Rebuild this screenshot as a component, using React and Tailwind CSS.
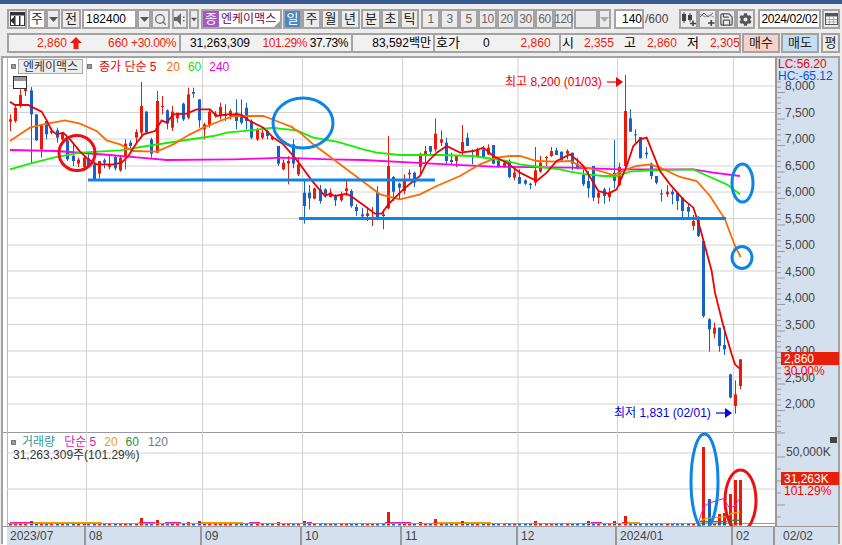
import React from 'react';
import { Search, Save } from 'lucide-react';
import { FaCog } from 'react-icons/fa';

// candle data read off the chart: [x, high, low, top, bottom, colour]
const sec3 = [
  [31,100,150,115,122,'r'],[46,70,125,80,120,'r'],[61,25,80,42,70,'r'],[76,-8,45,0,30,'r'],[94,18,248,28,100,'b'],
  [109,100,180,100,178,'b'],[124,130,230,130,205,'r'],[139,115,175,120,160,'b'],[154,140,160,150,155,'r'],[172,140,185,148,170,'b'],
  [187,155,185,155,175,'r'],[202,175,240,178,235,'b'],[220,185,255,225,240,'b'],[235,230,258,236,248,'r'],[252,225,262,230,258,'r'],
  [265,220,258,232,255,'b'],[283,248,300,250,296,'b'],[298,240,292,240,278,'r'],[313,232,262,238,245,'b'],[328,225,265,250,258,'r'],
  [346,225,268,228,262,'b'],[361,225,272,230,268,'r'],[376,175,265,188,225,'r'],[391,178,205,185,195,'b'],[409,145,190,153,170,'r'],
  [424,3,165,75,155,'r'],[439,90,155,92,155,'b'],[454,170,230,175,218,'b'],[472,30,215,60,215,'r'],[487,45,100,75,77,'r'],
  [502,85,145,88,128,'b'],[517,75,150,92,140,'r'],[532,98,125,95,112,'r'],[550,65,120,68,115,'b'],[565,20,115,40,110,'r'],
  [580,20,50,33,38,'b'],[598,55,140,55,118,'b'],[613,125,175,130,145,'r'],[628,85,140,92,135,'r'],[646,90,110,98,105,'r'],
  [661,65,115,78,105,'r'],[676,70,120,100,105,'r'],[691,85,115,90,105,'r'],[709,55,145,95,120,'b'],[724,55,130,100,125,'b'],
  [739,65,145,80,120,'b'],[754,115,175,120,170,'b'],[772,140,180,145,175,'r'],[787,145,175,155,170,'r'],[802,145,175,150,165,'b'],
  [817,165,178,168,175,'r'],[835,195,255,195,248,'b'],[850,235,268,245,265,'r'],[865,225,310,240,248,'r'],[880,175,262,190,248,'b'],
  [895,230,285,250,280,'r'],
];
const sec4 = [
  [73,300,428,335,375,'b'],[88,312,385,335,352,'b'],[103,320,355,322,353,'r'],[121,312,368,325,360,'b'],[136,322,350,325,340,'b'],
  [151,322,350,335,348,'r'],[166,340,375,342,358,'b'],[184,332,362,342,358,'r'],[199,300,345,322,330,'r'],[214,325,380,330,375,'b'],
  [229,370,405,378,390,'b'],[247,380,408,400,406,'b'],[262,378,420,397,405,'r'],[277,378,435,408,412,'r'],[292,315,418,335,412,'b'],
  [310,385,445,400,405,'b'],[325,165,385,255,382,'r'],[340,285,360,288,332,'b'],[358,305,355,308,320,'b'],[373,280,340,295,330,'r'],
  [388,265,300,275,280,'r'],[403,272,318,275,305,'b'],[421,215,285,218,258,'r'],[436,195,250,210,225,'r'],[451,195,225,195,212,'b'],
  [466,112,212,158,205,'r'],[484,148,195,175,185,'r'],[499,170,250,185,240,'b'],[514,215,250,237,243,'b'],[529,222,258,225,240,'r'],
  [547,132,222,183,210,'r'],[562,155,195,170,195,'b'],[577,205,250,210,212,'b'],[592,200,230,205,228,'r'],[610,195,232,205,230,'b'],
  [625,190,222,200,220,'r'],[640,192,250,192,248,'b'],[655,235,260,238,255,'b'],[673,240,260,245,258,'r'],[688,235,292,240,288,'b'],
  [703,258,298,275,290,'r'],[718,265,308,288,308,'b'],[736,295,312,298,308,'b'],[751,305,325,308,312,'b'],[766,198,315,268,305,'r'],
  [781,225,275,245,272,'r'],[799,225,255,228,232,'r'],[814,198,228,210,225,'r'],[829,200,222,208,222,'b'],[844,212,240,212,238,'b'],
  [862,205,235,210,218,'r'],[877,215,268,215,248,'b'],[892,230,265,248,262,'b'],
];
const sec5 = [
  [40,295,345,312,340,'b'],[55,300,380,330,352,'b'],[70,285,390,285,380,'b'],[85,360,398,365,380,'r'],[103,350,398,355,375,'b'],
  [118,350,392,365,378,'r'],[133,207,352,305,330,'b'],[148,275,345,288,342,'r'],[166,12,295,120,285,'r'],[181,115,182,142,182,'b'],
  [196,175,215,190,192,'b'],[211,198,262,198,262,'b'],[229,228,262,245,250,'b'],[244,275,325,278,315,'b'],[259,315,340,315,335,'b'],
  [274,355,392,367,369,'b'],[292,342,378,362,370,'r'],[307,355,400,362,370,'b'],[322,365,417,365,390,'b'],[337,378,442,380,420,'b'],
  [355,398,438,408,422,'b'],[370,432,478,450,465,'r'],[385,435,498,448,495,'b'],
];
const sec6 = [
  [310,-66,170,-60,165,'b'],[328,172,272,175,205,'b'],[343,185,232,200,218,'r'],[358,200,272,200,255,'b'],[373,195,282,252,265,'b'],
  [391,338,412,340,410,'b'],[406,358,458,400,435,'r'],[421,295,385,295,375,'r'],
];

const toPage = (list, ox, oy) =>
  list.map(([x, hi, lo, top, bot, c]) => ({
    x: Math.round(ox + x / 3),
    hi: oy + hi / 3,
    lo: oy + lo / 3,
    top: oy + top / 3,
    bot: oy + bot / 3,
    c,
  }));

const candles = [
  ...toPage(sec3, 0, 80),
  ...toPage(sec4, 280, 80),
  ...toPage(sec5, 570, 70),
  ...toPage(sec6, 600, 260),
];

const pts = (list, ox, oy) => list.map(([x, y]) => `${ox + x / 3},${oy + y / 3}`).join(' ');

const ma5 = [
  pts([[30,62],[45,72],[85,72],[100,80],[125,92],[140,118],[155,148],[170,160],[190,155],[210,175],[240,212],[265,235],[290,250],[340,250],[365,245],[385,225],[410,185],[430,160],[465,150],[485,118],[500,125],[520,100],[560,98],[590,85],[630,85],[650,105],[680,100],[720,100],[750,120],[790,140],[820,170],[850,190],[880,225]], 0, 80),
  pts([[40,225],[60,250],[95,298],[135,345],[150,338],[165,345],[200,338],[220,350],[250,372],[285,398],[305,398],[325,370],[345,350],[370,325],[400,300],[420,285],[440,245],[470,215],[500,195],[540,215],[580,210],[610,200],[640,225],[680,245],[720,275],[770,300],[800,275],[830,240],[870,220],[900,245]], 280, 80),
  pts([[40,285],[60,318],[85,360],[115,368],[140,355],[170,285],[190,225],[210,205],[230,200],[250,250],[270,300],[300,340],[340,385],[370,410],[390,470],[425,600]], 570, 70),
  pts([[345,95],[370,195],[395,280],[405,310],[418,322]], 600, 260),
].join(' ');

const ma20 = [
  pts([[30,180],[60,160],[90,140],[130,130],[195,118],[240,128],[290,150],[320,178],[360,190],[400,210],[470,212],[520,190],[570,160],[610,140],[660,120],[700,105],[790,105],[830,120],[880,140]], 0, 80),
  pts([[30,135],[60,155],[100,190],[160,235],[240,295],[300,340],[360,355],[420,340],[470,315],[540,285],[600,250],[650,230],[690,225],[720,225],[770,240],[830,242]], 280, 80),
  pts([[0,270],[30,285],[90,300],[130,312],[170,295],[200,285],[240,280],[270,290],[330,318],[380,330],[420,375],[465,445],[495,525],[512,558]], 570, 70),
].join(' ');

const ma60 = [
  pts([[30,265],[90,248],[160,230],[240,215],[360,208],[440,195],[540,180],[640,165],[680,155],[750,148],[820,140]], 0, 80),
  pts([[0,143],[50,148],[100,170],[170,182],[250,205],[290,215],[360,222],[480,222],[580,225],[680,240],[720,250],[780,258],[840,265]], 280, 80),
  pts([[0,302],[50,310],[100,315],[140,315],[180,302],[240,298],[370,295],[420,318],[470,340],[510,370]], 570, 70),
].join(' ');

const ma240 = [
  pts([[30,207],[170,210],[330,222],[420,230],[500,237],[700,235],[800,232]], 0, 80),
  pts([[0,230],[150,235],[250,237],[400,245],[500,250],[640,257]], 280, 80),
  pts([[0,290],[150,295],[370,295],[430,305],[510,315]], 570, 70),
].join(' ');

const RED = '#e9190b';
const BLUE = '#1560c9';
const MARK = '#0d84e8';
const gridX = [86.5, 202.5, 302.5, 402.5, 518, 617.5, 733.5];
const gridY = [85, 111.5, 138, 165, 191, 217.5, 244, 270, 297, 323.5, 350, 376, 403];
const prices = ['8,000', '7,500', '7,000', '6,500', '6,000', '5,500', '5,000', '4,500', '4,000', '3,500', '3,000', '2,500', '2,000'];

// [x, y top] small volume bars
const lowVol = [[30,520],[140,517],[156,519],[187,521],[198,520],[277,521],[303,520],[387,511],[419,521],[434,518],[461,520],[534,520],[587,520],[613,520],[624,515]];
const bigVol = [[702,446,RED],[708,498,BLUE],[718,513,RED],[723,512,RED],[729,493,RED],[734,479,RED],[739,479,RED]];
const volSegs = [
  [10,33,'#e020b0'],[33,102,'#eba000'],[139,155,'#e020b0'],[165,181,'#e020b0'],[198,243,'#eba000'],[249,260,'#e020b0'],[307,312,'#e020b0'],
  [385,411,'#e020b0'],[433,491,'#eba000'],[591,602,'#e020b0'],[622,638,'#e020b0'],[628,640,'#eba000'],
];

const Btn = ({ className = 'bg-[#ececec]', children }) => (
  <div className={`h-full shrink-0 flex items-center justify-center border-2 border-[#a3a3a3] text-[13px] text-[#222] ${className}`}>
    {children}
  </div>
);

const Caret = ({ color = '#555' }) => (
  <svg width="9" height="5" viewBox="0 0 9 5"><polygon points="0,0 9,0 4.5,5" fill={color} /></svg>
);

const Arrow = ({ color, w = 16 }) => (
  <svg width={w} height="10" viewBox={`0 0 ${w} 10`}>
    <line x1="0" y1="5" x2={w - 6} y2="5" stroke={color} strokeWidth="1.2" />
    <polygon points={`${w - 7},0 ${w},5 ${w - 7},10`} fill={color} />
  </svg>
);

const Toolbar = () => (
  <div className="flex h-[20px] mt-[5px] ml-[7px]">
    <Btn className="w-[20px] bg-[#ececec]">
      <svg width="15" height="14" viewBox="0 0 15 14">
        <rect x="0.5" y="0.5" width="14" height="13" fill="#fff" stroke="#333" />
        <rect x="1" y="1" width="13" height="2.5" fill="#333" />
        <rect x="4" y="4" width="1.5" height="9" fill="#333" />
        <rect x="9" y="4" width="1.5" height="9" fill="#333" />
        <polygon points="0,8.5 4,5 4,12" fill="#333" />
      </svg>
    </Btn>
    <Btn className="w-[18px] ml-[1px] bg-white">주</Btn>
    <Btn className="w-[14px] bg-[#ececec]"><Caret /></Btn>
    <Btn className="w-[20px] ml-[1px] bg-[#ececec]">전</Btn>
    <div className="w-[55px] ml-[1px] h-full bg-white border-2 border-[#a3a3a3] flex items-center pl-[2px] text-[12px] text-black">182400</div>
    <Btn className="w-[14px] bg-[#ececec]"><Caret /></Btn>
    <Btn className="w-[19px] bg-[#ececec]"><Search size={13} color="#666" strokeWidth={2.2} /></Btn>
    <Btn className="w-[16px] ml-[2px] bg-[#ececec]">
      <svg width="12" height="12" viewBox="0 0 12 12">
        <polygon points="0,4 3,4 7,0 7,12 3,8 0,8" fill="#666" />
        <rect x="9" y="3.5" width="1.5" height="1.5" fill="#666" />
        <rect x="9" y="7" width="1.5" height="1.5" fill="#666" />
      </svg>
    </Btn>
    <Btn className="w-[10px] ml-[1px] bg-[#ececec]"><Caret /></Btn>
    <div className="relative w-[81px] ml-[2px] h-full bg-white border-2 border-[#a3a3a3] flex items-center text-[12px] text-[#6b0a52] whitespace-nowrap">
      <span className="w-[16px] h-full shrink-0 bg-[#a956c9] text-white text-[13px] flex items-center justify-center">종</span>
      <span className="ml-[2px]">엔케이맥스</span>
      <span className="absolute right-0 bottom-0 w-0 h-0 border-l-[6px] border-l-transparent border-b-[6px] border-b-[#999]" />
    </div>
    <Btn className="w-[19px] ml-[1px] !text-white bg-[#4d86c6]">일</Btn>
    <Btn className="w-[19px] bg-[#ececec]">주</Btn>
    <Btn className="w-[19px] bg-[#ececec]">월</Btn>
    <Btn className="w-[20px] bg-[#ececec]">년</Btn>
    <Btn className="w-[20px] ml-[1px] bg-[#ececec]">분</Btn>
    <Btn className="w-[19px] bg-[#ececec]">초</Btn>
    <Btn className="w-[19px] bg-[#ececec]">틱</Btn>
    {['1', '3', '5', '10', '20', '30', '60', '120'].map((n, i) => (
      <Btn key={n} className={`w-[19px] bg-[#ececec] !text-[#666] tracking-[-0.5px] !text-[12px] ${i === 0 ? 'ml-[2px]' : ''}`}>{n}</Btn>
    ))}
    <Btn className="w-[24px] ml-[1px] bg-[#ececec]" />
    <Btn className="w-[13px] bg-[#ececec]"><Caret color="#aaa" /></Btn>
    <div className="w-[30px] ml-[3px] h-full bg-white border-2 border-[#a3a3a3] flex items-center justify-end text-[12px] text-black">140</div>
    <div className="w-[24px] ml-[1px] h-full flex items-center text-[12px] text-[#444]">/600</div>
    <Btn className="w-[19px] ml-[10px] bg-[#ececec]">
      <svg width="15" height="14" viewBox="0 0 15 14">
        <rect x="1" y="2" width="4" height="7" fill="#444" /><line x1="3" y1="0" x2="3" y2="11" stroke="#444" />
        <rect x="7" y="3" width="4" height="5" fill="#444" /><line x1="9" y1="1" x2="9" y2="10" stroke="#444" />
        <path d="M9 11.5h6M12 8.5v6" stroke="#444" strokeWidth="1.6" />
      </svg>
    </Btn>
    <Btn className="w-[19px] bg-[#ececec]">
      <svg width="15" height="14" viewBox="0 0 15 14" fill="none">
        <path d="M0 5L4 1L8 5L13 1" stroke="#666" />
        <path d="M0 2L5 5L9 3L14 5" stroke="#999" />
        <path d="M8 11h6.500M11.300 8v6" stroke="#444" strokeWidth="1.600" />
      </svg>
    </Btn>
    <Btn className="w-[19px] bg-[#ececec]"><Save size={15} color="#555" strokeWidth={2} /></Btn>
    <Btn className="w-[19px] bg-[#ececec]"><FaCog size={13} color="#555" /></Btn>
    <div className="w-[63px] ml-[3px] h-full bg-white border-2 border-[#a3a3a3] flex items-center justify-center text-[12px] tracking-[-0.4px] text-black">2024/02/02</div>
    <Btn className="w-[18px] ml-[1px] bg-[#ececec]">
      <svg width="13" height="12" viewBox="0 0 13 12" fill="none">
        <rect x="0.500" y="0.500" width="12" height="11" stroke="#555" fill="#fff" />
        <rect x="1" y="1" width="11" height="2.500" fill="#555" />
        <path d="M1 6.500h11M1 9h11M4.500 3v8M8.500 3v8" stroke="#aaa" />
      </svg>
    </Btn>
  </div>
);

const Cell = ({ w, className = '', children }) => (
  <span className={`shrink-0 text-right ${w} ${className}`}>{children}</span>
);

const QuoteRow = () => (
  <div className="flex h-[20px] mt-[4px] ml-[7px] text-[12px]">
    <div className="flex items-center w-[172px] h-full bg-[#f1f1f1] border-2 border-r-0 border-[#a3a3a3] text-[#ee1c0c] whitespace-nowrap">
      <Cell w="w-[58px]">2,860</Cell>
      <svg className="ml-[3px]" width="12" height="12" viewBox="0 0 12 12"><polygon points="6,0 12,6 8.500,6 8.500,12 3.500,12 3.500,6 0,6" fill="#ee1c0c" /></svg>
      <Cell w="w-[46px]">660</Cell>
      <Cell w="w-[48px]" className="tracking-[-0.4px]">+30.00%</Cell>
    </div>
    <div className="flex items-center w-[172px] h-full bg-[#f1f1f1] border-2 border-r-0 border-[#a3a3a3] text-black whitespace-nowrap">
      <Cell w="w-[69px]">31,263,309</Cell>
      <Cell w="w-[57px]" className="text-[#ee1c0c] tracking-[-0.4px]">101.29%</Cell>
      <Cell w="w-[41px]" className="tracking-[-0.4px]">37.73%</Cell>
    </div>
    <div className="flex items-center w-[82px] h-full bg-[#f1f1f1] border-2 border-r-0 border-[#a3a3a3] text-black whitespace-nowrap">
      <Cell w="w-[78px]">83,592백만</Cell>
    </div>
    <div className="flex items-center w-[126px] h-full bg-[#f1f1f1] border-2 border-r-0 border-[#a3a3a3] text-black">
      <span className="ml-[1px] text-[13px]">호가</span>
      <span className="ml-[23px]">0</span>
      <Cell w="w-[61px]" className="text-[#ee1c0c]">2,860</Cell>
    </div>
    <div className="flex items-center w-[182px] h-full bg-[#f1f1f1] border-2 border-[#a3a3a3] text-black">
      <span className="ml-[1px] text-[13px]">시</span>
      <Cell w="w-[40px]" className="text-[#ee1c0c]">2,355</Cell>
      <span className="ml-[10px] text-[13px]">고</span>
      <Cell w="w-[41px]" className="text-[#ee1c0c]">2,860</Cell>
      <span className="ml-[10px] text-[13px]">저</span>
      <Cell w="w-[41px]" className="text-[#ee1c0c]">2,305</Cell>
    </div>
    <Btn className="w-[38px] ml-[1px] bg-[#f5d2cb]">매수</Btn>
    <Btn className="w-[38px] ml-[1px] bg-[#c6def2]">매도</Btn>
    <Btn className="w-[19px] ml-[2px] bg-[#ececec]">평</Btn>
  </div>
);

const PricePlot = () => (
  <svg className="block" width="772" height="374" viewBox="3 57 772 374">
    {gridY.map((y) => <line key={y} x1="7" x2="775" y1={y} y2={y} stroke="#d2d2d2" />)}
    <line x1="7.500" x2="7.500" y1="57" y2="431" stroke="#b8b8b8" />
    {gridX.map((x) => <line key={x} x1={x} x2={x} y1="57" y2="431" stroke="#d2d2d2" />)}
    {candles.map((k, i) => (
      <g key={i} fill={k.c === 'r' ? RED : BLUE}>
        <rect x={k.x} y={k.hi} width="1" height={k.lo - k.hi} />
        <rect x={k.x - 1} y={k.top} width="3" height={Math.max(k.bot - k.top, 1)} />
      </g>
    ))}
    <g fill="none">
      <polyline points={ma240} stroke="#ff00e6" strokeWidth="1.800" />
      <polyline points={ma60} stroke="#14f000" strokeWidth="1.800" />
      <polyline points={ma20} stroke="#ff6a00" strokeWidth="1.800" />
      <polyline points={ma5} stroke="#f00000" strokeWidth="1.800" />
      <line x1="88" x2="435" y1="179" y2="179" stroke={MARK} strokeWidth="3" />
      <line x1="299" x2="726" y1="217.500" y2="217.500" stroke={MARK} strokeWidth="3" />
      <ellipse cx="303" cy="122" rx="30" ry="25" stroke={MARK} strokeWidth="3" />
      <ellipse cx="77" cy="152" rx="18" ry="17.500" stroke="#e8101a" strokeWidth="3" />
      <ellipse cx="742.500" cy="182" rx="10.500" ry="19" stroke={MARK} strokeWidth="3" />
      <ellipse cx="742" cy="256.500" rx="10" ry="11" stroke={MARK} strokeWidth="3" />
    </g>
  </svg>
);

const VolumePlot = () => (
  <svg className="block" width="772" height="94" viewBox="3 431 772 94">
    <line x1="3" x2="775" y1="431.500" y2="431.500" stroke="#999" />
    <line x1="7.500" x2="7.500" y1="431" y2="525" stroke="#b8b8b8" />
    {[452, 488].map((y) => <line key={y} x1="7" x2="775" y1={y} y2={y} stroke="#d2d2d2" />)}
    {gridX.map((x) => <line key={x} x1={x} x2={x} y1="431" y2="523" stroke="#d2d2d2" />)}
    {volSegs.map(([a, b, c], i) => <line key={i} x1={a} x2={b} y1="521.500" y2="521.500" stroke={c} />)}
    {lowVol.map(([x, y]) => <rect key={x} x={x} y={y} width="3" height={523 - y} fill={RED} />)}
    <line x1="8" x2="775" y1="522.500" y2="522.500" stroke="#999" />
    {candles.map((k, i) => <rect key={i} x={k.x - 1} y="523" width="3" height="1.500" fill={k.c === 'r' ? RED : BLUE} />)}
    {bigVol.map(([x, y, c]) => <rect key={x} x={x} y={y} width="3" height={523 - y} fill={c} />)}
    <g fill="none" strokeWidth="1">
      <polyline points={pts([[175,290],[190,245],[205,232],[250,218],[268,245],[285,240],[300,215]], 640, 425)} stroke="#e020b0" />
      <polyline points={pts([[175,290],[195,278],[225,275],[260,272],[275,262],[300,258]], 640, 425)} stroke="#eba000" strokeWidth="1.300" />
      <polyline points={pts([[180,287],[262,287]], 640, 425)} stroke="#16964a" strokeWidth="1.500" />
      <polyline points={pts([[270,283],[298,283]], 640, 425)} stroke="#16964a" strokeWidth="1.500" />
      <ellipse cx="704.500" cy="480.500" rx="13.500" ry="47.500" stroke={MARK} strokeWidth="3" />
      <ellipse cx="740.500" cy="499.500" rx="15.500" ry="30.500" stroke="#ee0f12" strokeWidth="3" />
    </g>
  </svg>
);

const Ticks = ({ start, count, step, major }) => (
  <svg className="absolute left-0 top-0" width="12" height="100%">
    {Array.from({ length: count }, (_, i) => {
      const y = start + i * step;
      return <line key={i} x1="0" x2={i % major === 0 ? 8 : 4} y1={y} y2={y} stroke="#9a9a9a" />;
    })}
  </svg>
);

const months = [
  ['w-[79px]', '2023/07'],
  ['w-[116px]', '08'],
  ['w-[100px]', '09'],
  ['w-[100px]', '10'],
  ['w-[116px]', '11'],
  ['w-[99px]', '12'],
  ['w-[116px]', '2024/01'],
  ['w-[42px]', '02'],
];

export default function App() {
  return (
    <div className="w-[842px] h-[545px] overflow-hidden bg-[#ededed] flex flex-col font-['Liberation_Sans','Noto_Sans_CJK_KR',sans-serif]">
      <div className="h-[4px] bg-[#3c5a92] shrink-0" />
      <Toolbar />
      <QuoteRow />
      <div className="ml-[1px] mt-[3px] w-[839px] h-[488px] flex flex-col border-2 border-[#a3a3a3] text-[12px]">
        {/* price pane */}
        <div className="flex h-[374px] shrink-0">
          <div className="relative w-[772px] bg-white">
            <PricePlot />
            <div className="absolute left-[8px] top-[1px] flex items-center h-[15px] whitespace-nowrap">
              <span className="w-[5px] h-[5px] bg-[#999] border border-[#777]" />
              <span className="ml-[2px] w-[65px] h-[15px] bg-[#ececec] border border-[#aaa] flex items-center justify-center text-[#333]">엔케이맥스</span>
              <span className="ml-[4px] w-[5px] h-[5px] bg-[#999] border border-[#777]" />
              <span className="ml-[7px] text-[#f00000]">종가 단순 5</span>
              <span className="ml-[10px] text-[#f26a00]">20</span>
              <span className="ml-[8px] text-[#14e000]">60</span>
              <span className="ml-[8px] text-[#f000e0]">240</span>
            </div>
            <div className="absolute left-[10px] top-[18px] w-[14px] h-[13px] bg-white border border-[#333] flex flex-col">
              <span className="h-[3px] bg-[#999]" />
              <span className="flex-1 border-t border-[#999]" />
            </div>
            <div className="absolute left-[502px] top-[15px] flex items-center gap-[5px] text-[#f00000] whitespace-nowrap">
              <span>최고 8,200 (01/03)</span>
              <Arrow color="#f00000" />
            </div>
            <div className="absolute left-[611px] top-[346px] flex items-center gap-[5px] text-[#0000e8] whitespace-nowrap">
              <span>최저 1,831 (02/01)</span>
              <Arrow color="#0000e8" />
            </div>
          </div>
          <div className="relative flex-1 bg-[#d5e0ef] border-l-2 border-[#999] text-[#444]">
            <Ticks start={8} count={72} step={5.300} major={5} />
            <div className="flex flex-col pt-[15px] pl-[8px]">
              {prices.map((p) => (
                <span key={p} className="h-[26.500px] flex items-center shrink-0">{p}</span>
              ))}
            </div>
            <div className="absolute left-0 top-0 w-full h-[23px] bg-[#d5e0ef] pl-[1px] leading-[12px]">
              <div className="text-[#f00000]">LC:56.20</div>
              <div className="text-[#0a50d8]">HC:-65.12</div>
            </div>
            <div className="absolute left-[4px] top-[294px] w-[58px]">
              <div className="h-[13px] bg-[#e8200a] text-white flex items-center pl-[3px]">2,860</div>
              <div className="pl-[3px] text-[#f00000] leading-[12px]">30.00%</div>
            </div>
          </div>
        </div>
        {/* volume pane */}
        <div className="flex h-[94px] shrink-0">
          <div className="relative w-[772px] bg-white">
            <VolumePlot />
            <div className="absolute left-[8px] top-[3px] flex items-center h-[14px] whitespace-nowrap">
              <span className="w-[5px] h-[5px] bg-[#999] border border-[#777]" />
              <span className="ml-[6px] text-[#2b9a9a]">거래량</span>
              <span className="ml-[9px] text-[#e020b0]">단순 5</span>
              <span className="ml-[8px] text-[#eba000]">20</span>
              <span className="ml-[8px] text-[#16964a]">60</span>
              <span className="ml-[9px] text-[#777]">120</span>
            </div>
            <div className="absolute left-[10px] top-[16px] text-[#333] leading-[14px]">31,263,309주(101.29%)</div>
          </div>
          <div className="relative flex-1 bg-[#d5e0ef] border-l-2 border-[#999] text-[#444]">
            <Ticks start={1} count={8} step={12} major={2} />
            <div className="pl-[9px] pt-[13px] leading-[14px]">50,000K</div>
            <div className="absolute left-[4px] top-[40px] w-[58px]">
              <div className="h-[13px] bg-[#e8200a] text-white flex items-center pl-[3px]">31,263K</div>
              <div className="pl-[3px] text-[#f00000] leading-[12px]">101.29%</div>
            </div>
            <div className="absolute right-[1px] top-[5px] w-[7px] h-[6px] bg-[#444]" />
          </div>
        </div>
        {/* time axis */}
        <div className="flex flex-1 bg-[#d5e0ef] border-t border-[#999] text-[#444]">
          <div className="w-[4px] shrink-0 bg-white" />
          {months.map(([w, label]) => (
            <div key={label} className={`${w} shrink-0 border-r-2 border-[#999] pl-[3px] flex items-center`}>
              {label}
            </div>
          ))}
          <div className="pl-[8px] flex items-center">02/02</div>
        </div>
      </div>
    </div>
  );
}
